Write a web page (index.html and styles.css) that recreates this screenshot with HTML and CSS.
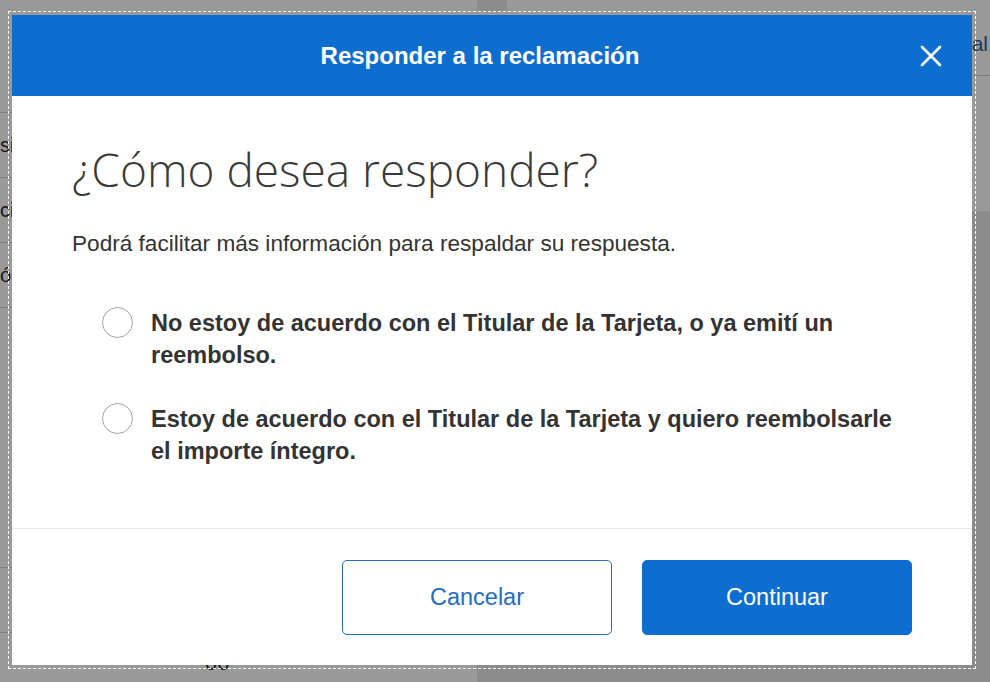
FILE: index.html
```html
<!DOCTYPE html>
<html lang="es">
<head>
<meta charset="utf-8">
<title>Responder a la reclamación</title>
<link rel="stylesheet" href="styles.css">
</head>
<body>
<div class="page">
  <div class="page-left">
    <div class="left-row"><span class="cut">sión</span></div>
    <div class="left-row"><span class="cut">ción</span></div>
    <div class="left-row"><span class="cut">ón</span></div>
    <div class="left-block"></div>
    <div class="left-row"></div>
    <div class="left-row"><span class="amount">00</span></div>
  </div>
  <div class="page-right">
    <div class="right-tab"></div>
    <div class="right-head"><span>Historial</span></div>
    <div class="right-gap"></div>
    <div class="right-panel"></div>
  </div>
</div>

<div class="overlay">
  <div class="modal" role="dialog" aria-labelledby="modal-title">
    <header class="modal-header">
      <h2 id="modal-title" class="modal-title">Responder a la reclamación</h2>
      <button class="close" type="button" aria-label="Cerrar">
        <svg width="22" height="22" viewBox="0 0 22 22" aria-hidden="true">
          <path d="M2 2 L20 20 M20 2 L2 20" stroke="#fff" stroke-width="2.6" stroke-linecap="round" fill="none"/>
        </svg>
      </button>
    </header>
    <div class="modal-body">
      <h1 class="question">¿Cómo desea responder?</h1>
      <p class="hint">Podrá facilitar más información para respaldar su respuesta.</p>
      <div class="options">
        <label class="option">
          <input type="radio" name="respuesta" class="radio">
          <span>No estoy de acuerdo con el Titular de la Tarjeta, o ya emití un reembolso.</span>
        </label>
        <label class="option">
          <input type="radio" name="respuesta" class="radio">
          <span>Estoy de acuerdo con el Titular de la Tarjeta y quiero reembolsarle el importe íntegro.</span>
        </label>
      </div>
    </div>
    <footer class="modal-footer">
      <button class="btn btn-outline" type="button">Cancelar</button>
      <button class="btn btn-primary" type="button">Continuar</button>
    </footer>
  </div>
</div>
</body>
</html>
```

FILE: styles.css
```css
* { box-sizing: border-box; }

html, body {
  margin: 0;
  width: 990px;
  height: 682px;
  overflow: hidden;
}

body {
  font-family: "Liberation Sans", Arial, Helvetica, sans-serif;
  color: #333;
  background: #fff;
}

/* ---------- background page ---------- */
.page {
  display: grid;
  grid-template-columns: 477px 1fr;
  height: 682px;
  background: #fff;
}

.page-left {
  padding-top: 112px;
}

.left-row {
  height: 65px;
  border-top: 1px solid #d4d4d4;
  display: flex;
  align-items: center;
  font-size: 20px;
  color: #2a2a2a;
}

.cut {
  white-space: nowrap;
}

.left-block {
  height: 260px;
  border-top: 1px solid #d4d4d4;
}

.left-row:last-child {
  height: 52px;
  align-items: flex-start;
}

.amount {
  margin-left: 205px;
  margin-top: 18px;
  font-size: 22px;
  line-height: 24px;
}

.page-right {
  display: flex;
  flex-direction: column;
}

.right-tab {
  width: 30px;
  height: 12px;
  background: #e9e9e9;
}

.right-head {
  height: 64px;
  border-bottom: 1px solid #d4d4d4;
  display: flex;
  align-items: center;
  justify-content: flex-end;
  padding-right: 2px;
  font-size: 21px;
  color: #2d5f9e;
}

.right-gap {
  height: 135px;
}

.right-panel {
  flex: 1;
  background: #e9e9e9;
}

/* ---------- overlay + modal ---------- */
.overlay {
  position: fixed;
  inset: 0;
  background: rgba(0, 0, 0, 0.4);
  display: flex;
  align-items: flex-start;
  padding: 15px 0 0 12px;
}

.modal {
  width: 960px;
  height: 650px;
  background: #fff;
  display: flex;
  flex-direction: column;
  outline: 1px dashed #fff;
  outline-offset: 3px;
}

.modal-header {
  position: relative;
  height: 81px;
  flex: none;
  background: #0e6ecf;
  display: flex;
  align-items: center;
  justify-content: center;
  padding-right: 24px;
}

.modal-title {
  margin: 0;
  color: #fff;
  font-size: 24px;
  font-weight: 700;
  line-height: 30px;
}

.close {
  position: absolute;
  right: 30px;
  top: 30px;
  width: 22px;
  height: 22px;
  padding: 0;
  border: 0;
  background: none;
  display: flex;
}

.modal-body {
  flex: 1;
  padding: 45px 60px 0 60px;
}

.question {
  margin: 0;
  font-family: "Open Sans", "Liberation Sans", sans-serif;
  font-weight: 300;
  font-size: 46px;
  line-height: 56px;
  color: #3a3a3a;
}

.hint {
  margin: 35px 0 0;
  font-size: 22.6px;
  line-height: 24px;
  color: #333;
}

.options {
  margin-top: 51px;
  display: flex;
  flex-direction: column;
  gap: 32px;
  padding-left: 30px;
}

.option {
  display: flex;
  align-items: flex-start;
  gap: 18px;
  font-size: 23.5px;
  font-weight: 700;
  line-height: 32px;
  color: #333;
}

.radio {
  appearance: none;
  -webkit-appearance: none;
  flex: none;
  width: 31px;
  height: 31px;
  margin: 0;
  border: 1px solid #a3a3a3;
  border-radius: 50%;
  background: #fff;
}

.modal-footer {
  flex: none;
  border-top: 1px solid #e8e8e8;
  padding: 31px 60px 30px;
  display: flex;
  justify-content: flex-end;
  gap: 30px;
}

.btn {
  width: 270px;
  height: 75px;
  border-radius: 5px;
  font-family: "Liberation Sans", Arial, sans-serif;
  font-size: 23.5px;
  cursor: pointer;
}

.btn-outline {
  background: #fff;
  border: 1px solid #2a6db8;
  color: #1f6cc0;
}

.btn-primary {
  background: #0e6ecf;
  border: 1px solid #0e6ecf;
  color: #fff;
}
```
